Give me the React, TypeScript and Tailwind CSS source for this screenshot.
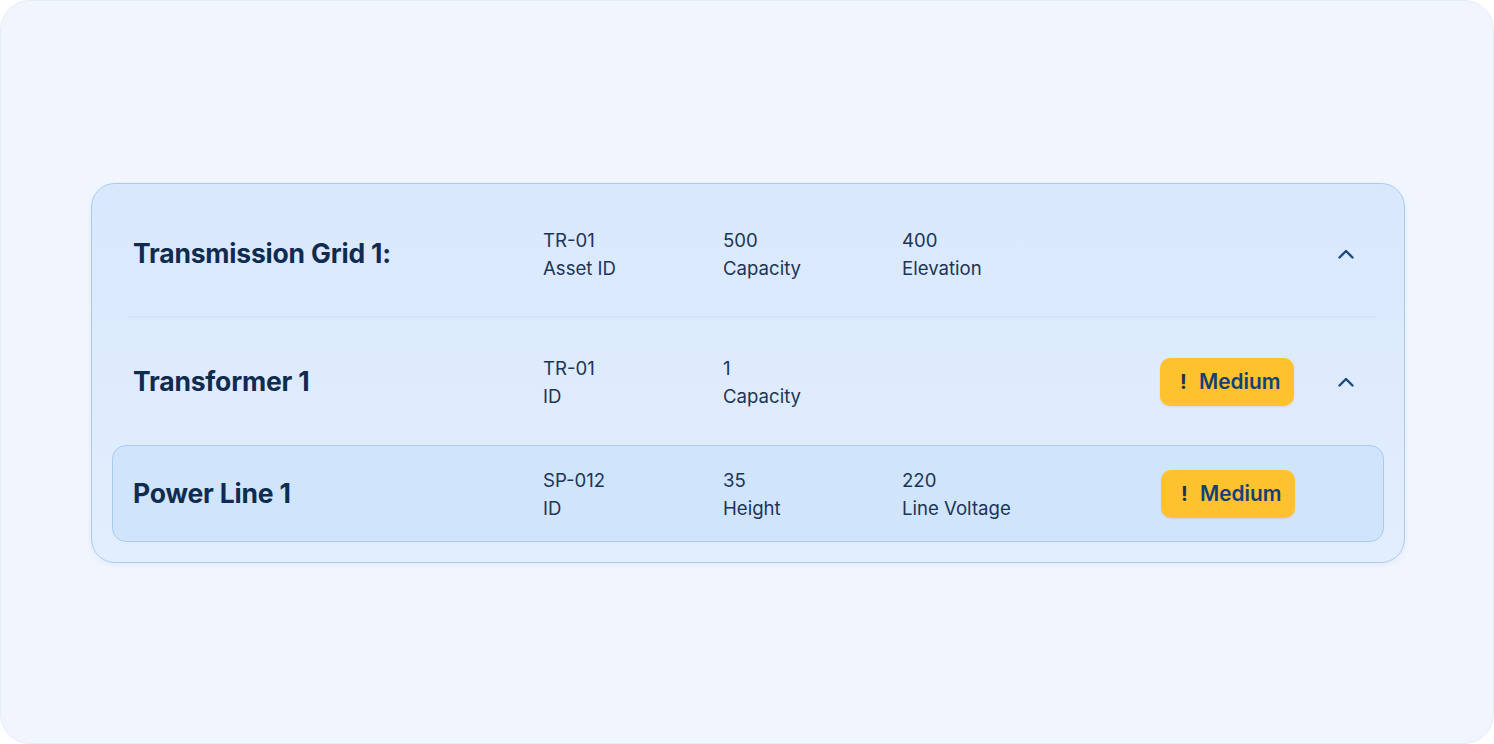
import { ReactNode } from 'react';

type Field = {
  value: string;
  label: string;
};

type AssetRowProps = {
  title: string;
  fields: Field[];
  badge?: boolean;
  chevron?: boolean;
  slotWidth?: string;
};

const ChevronUp = () => (
  <svg width="16" height="10" viewBox="0 0 16 10" fill="none">
    <path
      d="M1.5 8.5L8 2L14.5 8.5"
      stroke="#1c4a7d"
      strokeWidth="2.4"
      strokeLinecap="round"
      strokeLinejoin="round"
    />
  </svg>
);

const MediumBadge = () => (
  <div className="flex h-12 w-[134px] items-center rounded-[10px] bg-[#fec22e] pl-5 shadow-[0_1px_2px_rgba(180,130,0,0.15)]">
    <span className="w-[19px] text-[20px] font-bold text-[#12325a]">!</span>
    <span className="text-[20.8px] font-semibold text-[#114177]">Medium</span>
  </div>
);

const FieldCell = ({ value, label }: Field) => (
  <div className="flex flex-col text-[18.6px] leading-[28px] text-[#1b3558]">
    <span>{value}</span>
    <span>{label}</span>
  </div>
);

const Cols = ({ children }: { children: ReactNode }) => (
  <div className="grid grid-cols-[180px_179px_200px]">{children}</div>
);

const AssetRow = ({ title, fields, badge, chevron }: AssetRowProps) => {
  return (
    <div className="flex h-full items-center">
      <h2 className="w-[410px] text-[26.5px] font-bold tracking-[-0.2px] text-[#0f2c50]">
        {title}
      </h2>
      <Cols>
        {fields.map((f) => (
          <FieldCell key={f.label} {...f} />
        ))}
      </Cols>
      <div className="ml-auto flex items-center gap-[14px]">
        {badge && <MediumBadge />}
        <div className={chevron ? 'flex w-[76px] justify-center' : 'w-[74px]'}>
          {chevron && <ChevronUp />}
        </div>
      </div>
    </div>
  );
};

export default function App() {
  return (
    <div
      className="h-[744px] w-[1494px] bg-white"
      style={{ fontFamily: 'Inter, "Noto Sans", sans-serif' }}
    >
      <div className="flex h-full w-full flex-col rounded-[30px] border border-[#e6ecf7] bg-[#f1f6fe] pl-[90px] pr-[88px] pt-[182px]">
        <div className="rounded-[24px] border border-[#a9cbf0] bg-gradient-to-b from-[#d9e8fd] to-[#e2eefd] px-5 pb-5 pt-5 shadow-[0_2px_6px_rgba(120,160,220,0.12)]">
          <div className="h-[100px] pl-[21px]">
            <AssetRow
              title="Transmission Grid 1:"
              fields={[
                { value: 'TR-01', label: 'Asset ID' },
                { value: '500', label: 'Capacity' },
                { value: '400', label: 'Elevation' },
              ]}
              chevron
            />
          </div>
          <div className="ml-4 mr-2 mt-[12px] h-[2px] bg-[#d6e5fb]" />
          <div className="h-[127px] pl-[21px]">
            <AssetRow
              title="Transformer 1"
              fields={[
                { value: 'TR-01', label: 'ID' },
                { value: '1', label: 'Capacity' },
              ]}
              badge
              chevron
            />
          </div>
          <div className="h-[97px] rounded-[14px] border border-[#a9cbf0] bg-[#d0e4fb] pl-5">
            <AssetRow
              title="Power Line 1"
              fields={[
                { value: 'SP-012', label: 'ID' },
                { value: '35', label: 'Height' },
                { value: '220', label: 'Line Voltage' },
              ]}
              badge
            />
          </div>
        </div>
      </div>
    </div>
  );
}
